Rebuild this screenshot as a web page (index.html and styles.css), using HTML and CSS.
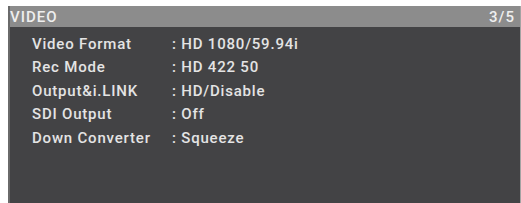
FILE: index.html
```html
<!DOCTYPE html>
<html>
<head>
<meta charset="utf-8">
<link rel="stylesheet" href="styles.css">
</head>
<body>
<div class="screen">
  <div class="titlebar">
    <span class="title">VIDEO</span>
    <span class="page">3/5</span>
  </div>
  <div class="body">
    <div class="row"><span class="label">Video Format</span><span class="value">: HD 1080/59.94i</span></div>
    <div class="row"><span class="label">Rec Mode</span><span class="value">: HD 422 50</span></div>
    <div class="row"><span class="label">Output&amp;i.LINK</span><span class="value">: HD/Disable</span></div>
    <div class="row"><span class="label">SDI Output</span><span class="value">: Off</span></div>
    <div class="row"><span class="label">Down Converter</span><span class="value">: Squeeze</span></div>
  </div>
</div>
</body>
</html>
```
FILE: styles.css
```css
html, body {
  margin: 0;
  padding: 0;
  background: #ffffff;
  width: 521px;
  height: 203px;
  overflow: hidden;
}
.screen {
  margin: 6px 0 0 8px;
  width: 510px;
  height: 197px;
  background: #434345;
  border-left: 2px solid #6a6a6a;
  border-right: 3px solid #a3a3a3;
  display: flex;
  flex-direction: column;
  font-family: Roboto, "Liberation Sans", sans-serif;
  color: #e4e4e4;
}
.titlebar {
  height: 21px;
  background: #8c8c8c;
  display: flex;
  justify-content: space-between;
  align-items: center;
  padding: 0 5px 0 0;
  font-size: 15px;
  font-weight: 500;
  color: #efefef;
  letter-spacing: 1px;
}
.body {
  padding: 5px 0 0 22px;
  display: flex;
  flex-direction: column;
}
.row {
  display: flex;
  height: 23.5px;
  align-items: center;
  font-size: 15px;
  font-weight: 500;
  letter-spacing: 0.8px;
}
.label {
  width: 140px;
}
```
